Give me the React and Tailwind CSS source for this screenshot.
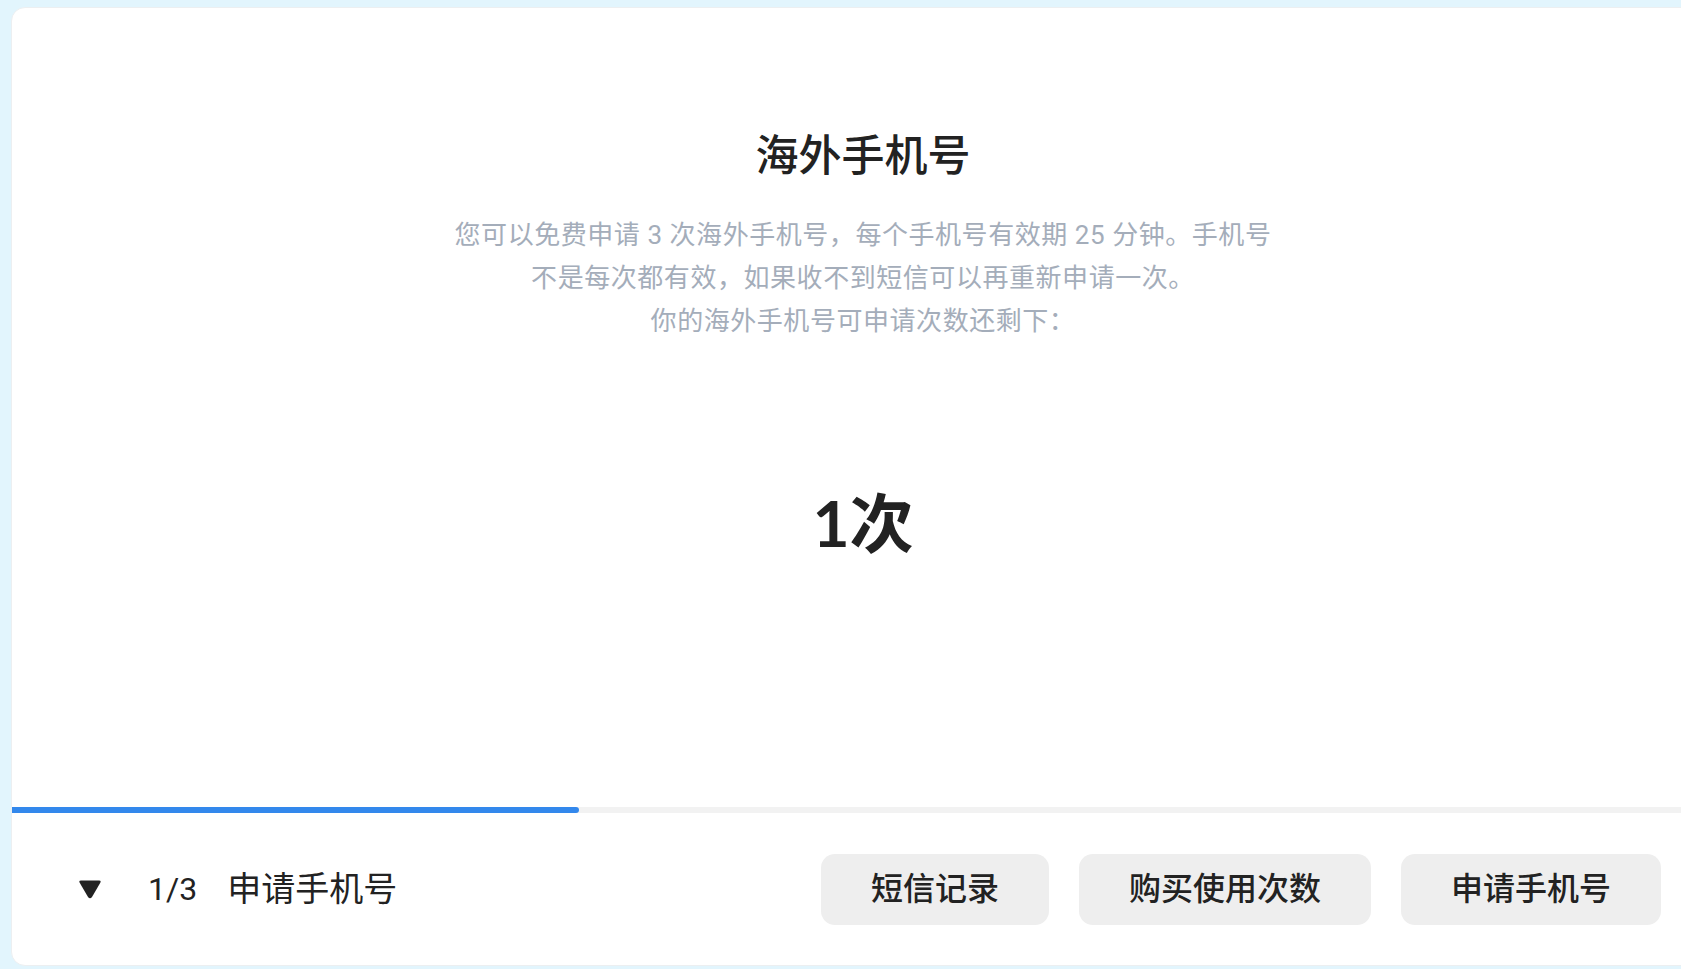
import React from 'react';

function Caret() {
  return (
    <svg width="24" height="20" viewBox="0 0 24 20" className="shrink-0">
      <path
        d="M3 1.5 H21 Q23.5 1.5 22.3 3.7 L14 18 Q12 20.5 10 18 L1.7 3.7 Q0.5 1.5 3 1.5 Z"
        fill="#222222"
      />
    </svg>
  );
}

function ActionButton({ children }) {
  return (
    <button className="h-[71px] px-[50px] rounded-[14px] bg-[#eeeeee] text-[32px] font-medium text-[#222222] leading-none whitespace-nowrap">
      {children}
    </button>
  );
}

export default function App() {
  return (
    <div
      className="w-[1681px] h-[969px] overflow-hidden bg-[#e2f5fd] pt-[7px] pl-[11px]"
      style={{ fontFamily: 'Roboto, "Noto Sans CJK SC", sans-serif' }}
    >
      <div className="w-[1704px] h-[959px] bg-white rounded-[14px] border border-[#eceff1] flex flex-col overflow-hidden">
        {/* main content */}
        <div className="h-[799px] flex flex-col items-center pt-[120px]">
          <h1 className="text-[43px] leading-[56px] font-medium text-[#222222]">海外手机号</h1>
          <p className="mt-[30px] text-[26px] leading-[43px] tracking-[0.55px] text-[#a4adba] text-center">
            您可以免费申请 3 次海外手机号，每个手机号有效期 25 分钟。手机号
            <br />
            不是每次都有效，如果收不到短信可以再重新申请一次。
            <br />
            你的海外手机号可申请次数还剩下：
          </p>
          <div
            className="mt-[141px] text-[64px] leading-[77px] font-bold text-[#222222]"
            style={{ fontFamily: 'Lato, "Noto Sans CJK SC", sans-serif' }}
          >
            1次
          </div>
        </div>

        {/* progress */}
        <div className="h-[6px] bg-[#f2f2f2] w-full">
          <div className="h-full bg-[#3388ec] rounded-r-full" style={{ width: `${(1 / 3) * 100}%` }} />
        </div>

        {/* footer */}
        <div className="flex-1 flex items-center justify-between pl-[66px] pr-[53px]">
          <div className="flex items-center text-[#222222]">
            <Caret />
            <span className="ml-[46px] text-[32px]">1/3</span>
            <span className="ml-[30px] text-[34px]">申请手机号</span>
          </div>
          <div className="flex items-center gap-[30px]">
            <ActionButton>短信记录</ActionButton>
            <ActionButton>购买使用次数</ActionButton>
            <ActionButton>申请手机号</ActionButton>
          </div>
        </div>
      </div>
    </div>
  );
}
